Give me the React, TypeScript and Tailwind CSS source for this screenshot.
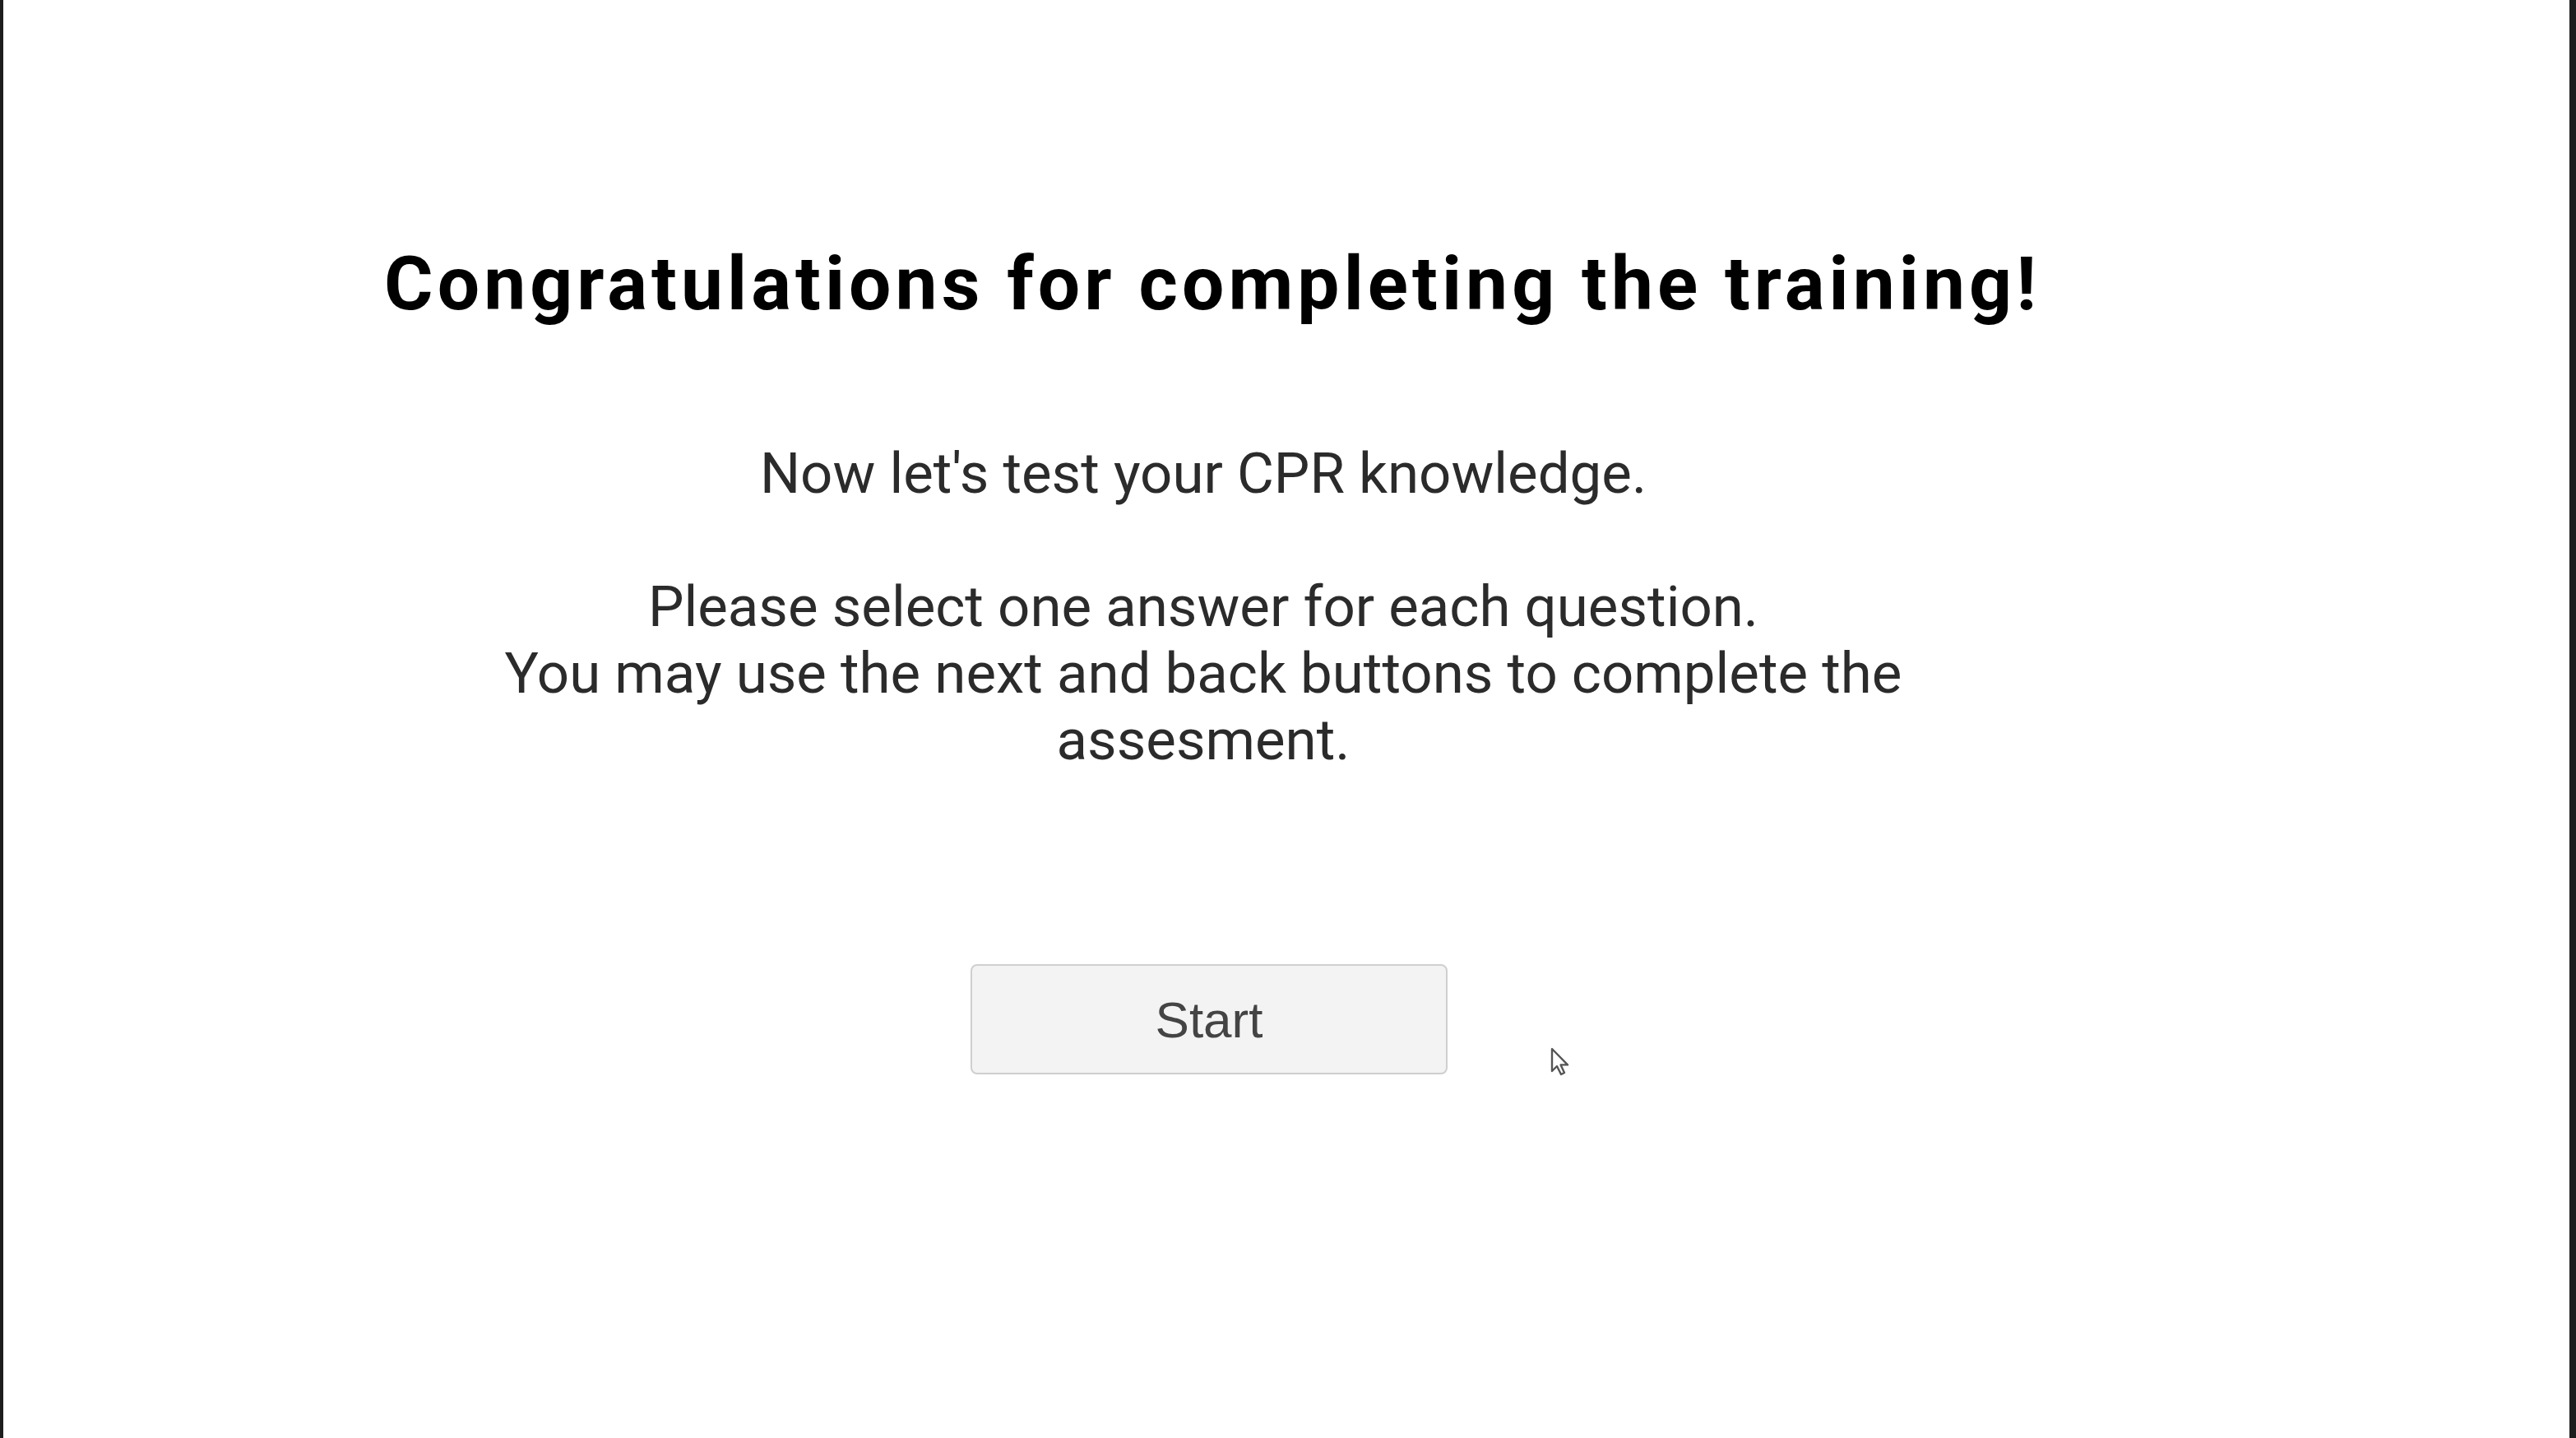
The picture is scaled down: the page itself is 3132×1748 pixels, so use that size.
export default function App() {
  return (
    <div className="flex h-[1748px] w-[3132px] bg-[#1e1e1e]">
      <div className="relative ml-[4px] mr-[8px] flex flex-1 flex-col items-center bg-white pr-[180px] font-['Roboto',sans-serif]">
        <h1 className="mt-[300px] text-[91px] font-bold leading-none tracking-[0.056em] text-black">
          Congratulations for completing the training!
        </h1>
        <div className="mr-[22px] mt-[144px] max-w-[1800px] text-center text-[69px] leading-[81px] text-[#2b2b2b]">
          <p>Now let's test your CPR knowledge.</p>
          <p className="mt-[81px]">
            Please select one answer for each question.
            <br />
            You may use the next and back buttons to complete the assesment.
          </p>
        </div>
        <button className="mr-[8px] mt-[232px] h-[134px] w-[580px] rounded-[8px] border-2 border-[#cfcfcf] bg-[#f3f3f3] font-['Liberation_Sans',Arial,sans-serif] text-[62px] text-[#444]">
          Start
        </button>
        <svg
          className="absolute left-[1880px] top-[1272px]"
          width="30"
          height="40"
          viewBox="0 0 15 20"
        >
          <path
            d="M1.5 1.5 L1.5 15 L4.5 12 L7 17 L9 16 L6.8 11.2 L11 11.2 Z"
            fill="white"
            stroke="#555"
            strokeWidth="1.2"
            strokeLinejoin="round"
          />
        </svg>
      </div>
    </div>
  );
}
